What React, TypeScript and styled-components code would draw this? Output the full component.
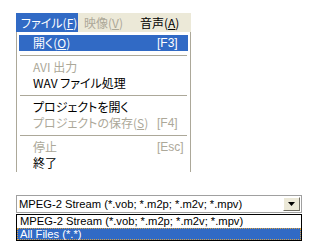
import React from 'react'
import styled, { createGlobalStyle } from 'styled-components'

const GlobalStyle = createGlobalStyle`
  body {
    margin: 0;
    background: #ffffff;
  }
`

const Page = styled.div`
  width: 320px;
  height: 250px;
  padding: 13px 0 0 16px;
  box-sizing: border-box;
  font-family: "Noto Sans CJK JP", "Liberation Sans", sans-serif;
  font-size: 12px;
  font-feature-settings: "palt";
  color: #000;
  overflow: hidden;
`

const MenuBlock = styled.div`
  width: 175px;
`

const MenuBar = styled.div`
  display: flex;
  height: 19px;
  background: #ece9d8;
`

const BarItem = styled.div<{ $active?: boolean; $disabled?: boolean; $width: number }>`
  display: flex;
  align-items: center;
  flex: 0 0 auto;
  width: ${(p) => p.$width}px;
  box-sizing: border-box;
  padding-left: ${(p) => (p.$active ? '5px' : '6px')};
  height: 100%;
  line-height: 15px;
  white-space: nowrap;
  background: ${(p) => (p.$active ? '#316ac5' : 'transparent')};
  color: ${(p) => (p.$active ? '#fff' : p.$disabled ? '#aca899' : '#000')};
`

const Popup = styled.div`
  height: 140px;
  background: #fff;
  border-left: 1px solid #aca899;
  border-right: 1px solid #aca899;
  padding: 3px 2px 0 2px;
  box-sizing: border-box;
`

const Item = styled.div<{ $active?: boolean; $disabled?: boolean; $tall?: boolean }>`
  display: grid;
  grid-template-columns: 124px 1fr;
  align-items: center;
  height: ${(p) => (p.$tall ? '16px' : '15px')};
  line-height: 14px;
  padding-left: 14px;
  background: ${(p) => (p.$active ? '#316ac5' : 'transparent')};
  color: ${(p) => (p.$active ? '#fff' : p.$disabled ? '#aca899' : '#000')};
  white-space: nowrap;
`

const Shortcut = styled.span`
  font-family: "Liberation Sans", sans-serif;
`

const Separator = styled.div`
  height: 8px;
  display: flex;
  align-items: center;
  padding: 0 1px;

  &::after {
    content: '';
    flex: 1;
    height: 1px;
    background: #aca899;
  }
`

const ComboArea = styled.div`
  margin-top: 23px;
  width: 286px;
  font-family: "Liberation Sans", sans-serif;
  font-size: 11.2px;
`

const Combo = styled.div`
  display: flex;
  align-items: center;
  justify-content: space-between;
  height: 18px;
  border: 1px solid #a0a0a0;
  box-sizing: border-box;
  padding: 0 1px 0 2px;
  white-space: nowrap;
`

const ComboButton = styled.div`
  width: 17px;
  height: 14px;
  box-sizing: border-box;
  background: #ece9d8;
  border: 1px solid;
  border-color: #fff #716f64 #716f64 #fff;
  display: flex;
  align-items: center;
  justify-content: center;
`

const List = styled.div`
  margin-top: 1px;
  border: 1px solid #000;
  box-sizing: border-box;
`

const Option = styled.div<{ $selected?: boolean }>`
  height: 12.5px;
  line-height: 12px;
  padding-left: 2px;
  box-sizing: border-box;
  white-space: nowrap;
  background: ${(p) => (p.$selected ? '#316ac5' : '#fff')};
  color: ${(p) => (p.$selected ? '#fff' : '#000')};
  border: 1px dotted ${(p) => (p.$selected ? '#d8a040' : 'transparent')};
  display: flex;
  align-items: center;
`

export default function App() {
  return (
    <Page>
      <GlobalStyle />
      <MenuBlock>
        <MenuBar>
          <BarItem $active $width={62}>ファイル(<u>F</u>)</BarItem>
          <BarItem $disabled $width={56}>映像(<u>V</u>)</BarItem>
          <BarItem $width={57}>音声(<u>A</u>)</BarItem>
        </MenuBar>
        <Popup>
          <Item $active $tall>
            <span>開く(<u>O</u>)</span>
            <Shortcut>[F3]</Shortcut>
          </Item>
          <Separator />
          <Item $disabled $tall>
            <span>AVI 出力</span>
          </Item>
          <Item $tall>
            <span>WAV ファイル処理</span>
          </Item>
          <Separator />
          <Item $tall>
            <span>プロジェクトを開く</span>
          </Item>
          <Item $disabled $tall>
            <span>プロジェクトの保存(<u>S</u>)</span>
            <Shortcut>[F4]</Shortcut>
          </Item>
          <Separator />
          <Item $disabled $tall>
            <span>停止</span>
            <Shortcut>[Esc]</Shortcut>
          </Item>
          <Item $tall>
            <span>終了</span>
          </Item>
        </Popup>
      </MenuBlock>
      <ComboArea>
        <Combo>
          <span>MPEG-2 Stream (*.vob; *.m2p; *.m2v; *.mpv)</span>
          <ComboButton>
            <svg width="7" height="4" viewBox="0 0 7 4">
              <path d="M0 0h7L3.5 4z" fill="#000" />
            </svg>
          </ComboButton>
        </Combo>
        <List>
          <Option>MPEG-2 Stream (*.vob; *.m2p; *.m2v; *.mpv)</Option>
          <Option $selected>All Files (*.*)</Option>
        </List>
      </ComboArea>
    </Page>
  )
}
